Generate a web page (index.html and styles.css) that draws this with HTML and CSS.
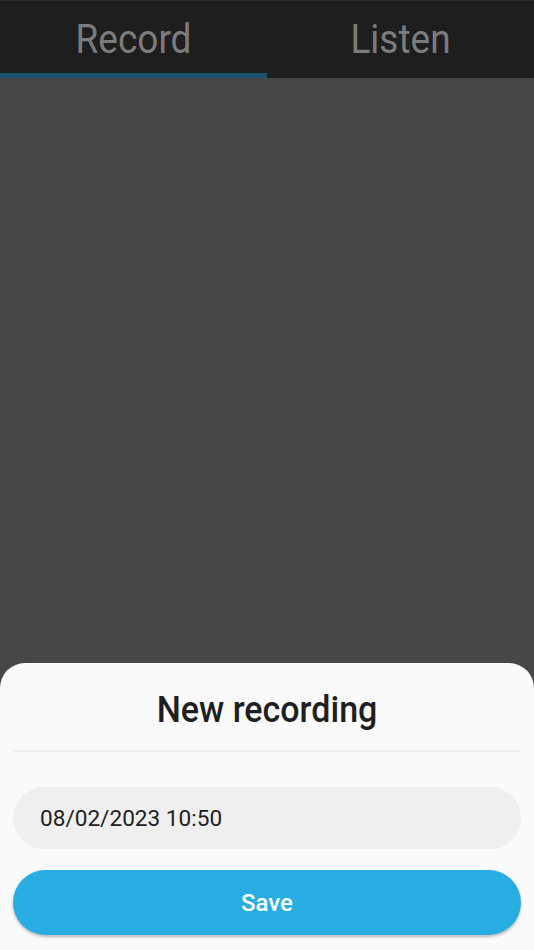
FILE: index.html
```html
<!DOCTYPE html>
<html>
<head>
<meta charset="utf-8">
<link rel="stylesheet" href="styles.css">
</head>
<body>
<div class="app">
  <div class="tabs">
    <div class="tab active"><span class="tab-label">Record</span></div>
    <div class="tab"><span class="tab-label">Listen</span></div>
  </div>
  <div class="content"></div>
  <div class="sheet">
    <div class="sheet-title">New recording</div>
    <div class="divider"></div>
    <div class="field">08/02/2023 10:50</div>
    <button class="save">Save</button>
  </div>
</div>
</body>
</html>
```
FILE: styles.css
```css
* { box-sizing: border-box; }
html, body { margin: 0; padding: 0; }
body {
  width: 534px;
  height: 950px;
  overflow: hidden;
  font-family: Roboto, "Noto Sans", sans-serif;
  background: #474747;
}
.app {
  display: flex;
  flex-direction: column;
  height: 950px;
}
.tabs {
  display: flex;
  height: 78px;
  background: #1e1e1e;
  border-top: 1px solid #2a2a2a;
}
.tab {
  flex: 1;
  display: flex;
  justify-content: center;
  align-items: flex-start;
  padding-top: 15px;
  border-bottom: 5px solid transparent;
}
.tab.active { border-bottom-color: #1a5370; }
.tab-label {
  font-size: 37px;
  line-height: 48px;
  color: #7c7c7c;
  transform: scaleY(1.1);
}
.content {
  flex: 1;
  background: #474747;
}
.sheet {
  background: #fafafa;
  border-radius: 25px 25px 0 0;
  padding: 20px 13px 15px;
  display: flex;
  flex-direction: column;
}
.sheet-title {
  text-align: center;
  font-size: 34px;
  font-weight: 500;
  color: #1f1f1f;
  line-height: 52px;
  transform: scaleY(1.06);
}
.divider {
  height: 2px;
  background: #eeeeee;
  margin-top: 15px;
}
.field {
  margin-top: 35px;
  height: 62px;
  border-radius: 31px;
  background: #efefef;
  padding-left: 27px;
  display: flex;
  align-items: center;
  font-size: 22.6px;
  color: #222222;
}
.save {
  margin-top: 21px;
  height: 65px;
  border: none;
  border-radius: 33px;
  background: #27ade2;
  color: #ffffff;
  font-family: Roboto, "Noto Sans", sans-serif;
  font-size: 24px;
  font-weight: 500;
  box-shadow: 0 2px 3px rgba(0,0,0,0.25);
}
```
